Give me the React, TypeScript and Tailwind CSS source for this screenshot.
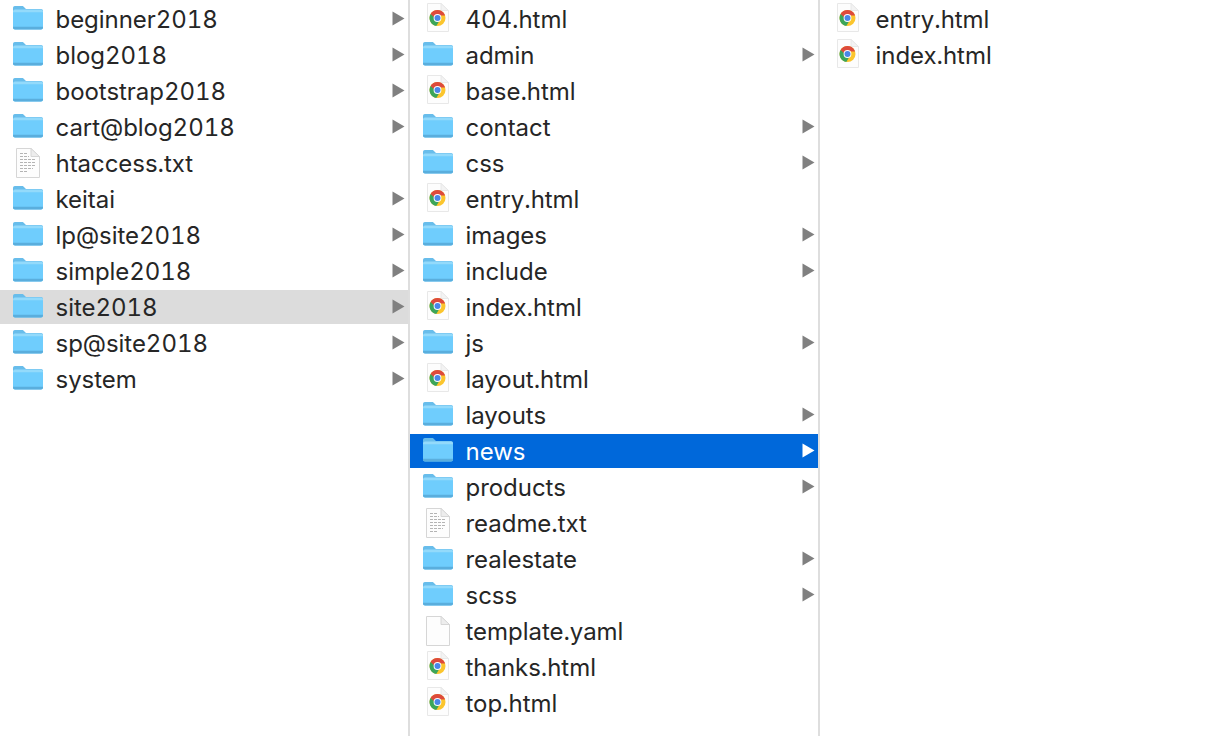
import React from "react";

type Kind = "folder" | "chrome" | "txt" | "blank";
type Item = { name: string; kind: Kind; selected?: "gray" | "blue" };

const col1: Item[] = [
  { name: "beginner2018", kind: "folder" },
  { name: "blog2018", kind: "folder" },
  { name: "bootstrap2018", kind: "folder" },
  { name: "cart@blog2018", kind: "folder" },
  { name: "htaccess.txt", kind: "txt" },
  { name: "keitai", kind: "folder" },
  { name: "lp@site2018", kind: "folder" },
  { name: "simple2018", kind: "folder" },
  { name: "site2018", kind: "folder", selected: "gray" },
  { name: "sp@site2018", kind: "folder" },
  { name: "system", kind: "folder" },
];
const col2: Item[] = [
  { name: "404.html", kind: "chrome" },
  { name: "admin", kind: "folder" },
  { name: "base.html", kind: "chrome" },
  { name: "contact", kind: "folder" },
  { name: "css", kind: "folder" },
  { name: "entry.html", kind: "chrome" },
  { name: "images", kind: "folder" },
  { name: "include", kind: "folder" },
  { name: "index.html", kind: "chrome" },
  { name: "js", kind: "folder" },
  { name: "layout.html", kind: "chrome" },
  { name: "layouts", kind: "folder" },
  { name: "news", kind: "folder", selected: "blue" },
  { name: "products", kind: "folder" },
  { name: "readme.txt", kind: "txt" },
  { name: "realestate", kind: "folder" },
  { name: "scss", kind: "folder" },
  { name: "template.yaml", kind: "blank" },
  { name: "thanks.html", kind: "chrome" },
  { name: "top.html", kind: "chrome" },
];
const col3: Item[] = [
  { name: "entry.html", kind: "chrome" },
  { name: "index.html", kind: "chrome" },
];

function FolderIcon() {
  return (
    <svg width="32" height="26" viewBox="0 0 32 26" className="-mt-[2px]">
      <path d="M1 6V3C1 1.8 1.8 1 2.8 1H10c1 0 1.5.4 2.2 1.2L14 4H29c1.2 0 2 .8 2 2v2H1z" fill="#68bdeb" />
      <path d="M1 7C1 5.8 1.8 5 3 5H29c1.2 0 2 .8 2 2V22.5c0 1.2-.8 2-2 2H3c-1.2 0-2-.8-2-2z" fill="#6fcdfd" />
      <path d="M1 6.8C1 5.6 1.8 4.6 3 4.6H29c1.2 0 2 1 2 2.2v.4H1z" fill="#93dafb" />
      <path d="M1 22.5c0 1.2.8 2 2 2H29c1.2 0 2-.8 2-2v-.7H1z" fill="#5aaedd" />
    </svg>
  );
}

function PageShape({ lines }: { lines?: boolean }) {
  return (
    <>
      <path d="M1.5 .5H16L24.5 8.5V29.5H1.5z" fill="#fdfdfd" stroke="#d6d6d6" />
      <path d="M16 .5V8.5H24.5z" fill="#ededed" stroke="#d6d6d6" />
      {lines && (
        <g stroke="#b4b4b4" strokeWidth="1" strokeDasharray="3 1">
          <path d="M5 5.5H13M5 8.5H14M5 11.5H20M5 14.5H21M5 17.5H21M5 20.5H18M5 23.5H12" />
        </g>
      )}
    </>
  );
}

function TxtIcon() {
  return (
    <svg width="26" height="30" viewBox="0 0 26 30" className="ml-[3px] -mt-[1px]">
      <PageShape lines />
    </svg>
  );
}

function BlankIcon() {
  return (
    <svg width="26" height="30" viewBox="0 0 26 30" className="ml-[3px] -mt-[1px]">
      <PageShape />
    </svg>
  );
}

function ChromeIcon() {
  return (
    <svg width="25" height="30" viewBox="0 0 25 30" className="ml-[3px] -mt-[4px]">
      <path d="M2.5 1.5H16L23.5 8.5V29.5H2.5z" fill="#fdfdfd" stroke="#e8e8e8" />
      <path d="M16 1.5V8.5H23.5z" fill="#f3f3f3" stroke="#e8e8e8" />
      <g transform="translate(12.5 16)">
        <circle r="8" fill="#fbc52d" />
        <path d="M-6.93 -4A8 8 0 0 1 6.93 -4L7.5 -2.6H0L-3.4 2z" fill="#dd4a3c" />
        <path d="M-6.93 -4A8 8 0 0 0 -1.2 7.9L2.4 2-1.6 1.8-3.4-.8z" fill="#3ba55a" />
        <circle r="3.9" fill="#ffffff" />
        <circle r="3" fill="#4a86e8" />
      </g>
    </svg>
  );
}

function Icon({ kind }: { kind: Kind }) {
  if (kind === "folder") return <FolderIcon />;
  if (kind === "chrome") return <ChromeIcon />;
  if (kind === "txt") return <TxtIcon />;
  return <BlankIcon />;
}

function Row({ item }: { item: Item }) {
  const isBlue = item.selected === "blue";
  const isGray = item.selected === "gray";
  return (
    <div
      className={`flex h-[34px] items-center pl-3 pr-[3px] ${isBlue ? "bg-[#0068da] text-white" : isGray ? "bg-[#dcdcdc] text-[#262626]" : "text-[#262626]"}`}
    >
      <span className="flex w-[43.5px] shrink-0 items-center">
        <Icon kind={item.kind} />
      </span>
      <span className="flex-1 pt-[2px] text-[24px] leading-[34px] tabular-nums tracking-[-0.04px]">{item.name}</span>
      {item.kind === "folder" && (
        <svg width="13" height="15" viewBox="0 0 13 15" className="-mt-[2px]">
          <path d="M0.5 0.5L12.5 7.5L0.5 14.5z" fill={isBlue ? "#ffffff" : "#808080"} />
        </svg>
      )}
    </div>
  );
}

function Column({ items, last }: { items: Item[]; last?: boolean }) {
  return (
    <div className={`flex flex-col gap-[2px] pt-[2px] ${last ? "w-[408px]" : "w-[410px] border-r-2 border-[#dedede]"}`}>
      {items.map((i) => (
        <Row key={i.name} item={i} />
      ))}
    </div>
  );
}

export default function App() {
  return (
    <div className="flex h-[736px] w-[1228px] overflow-hidden bg-white font-['Inter','Liberation_Sans',sans-serif]">
      <Column items={col1} />
      <Column items={col2} />
      <Column items={col3} last />
    </div>
  );
}
